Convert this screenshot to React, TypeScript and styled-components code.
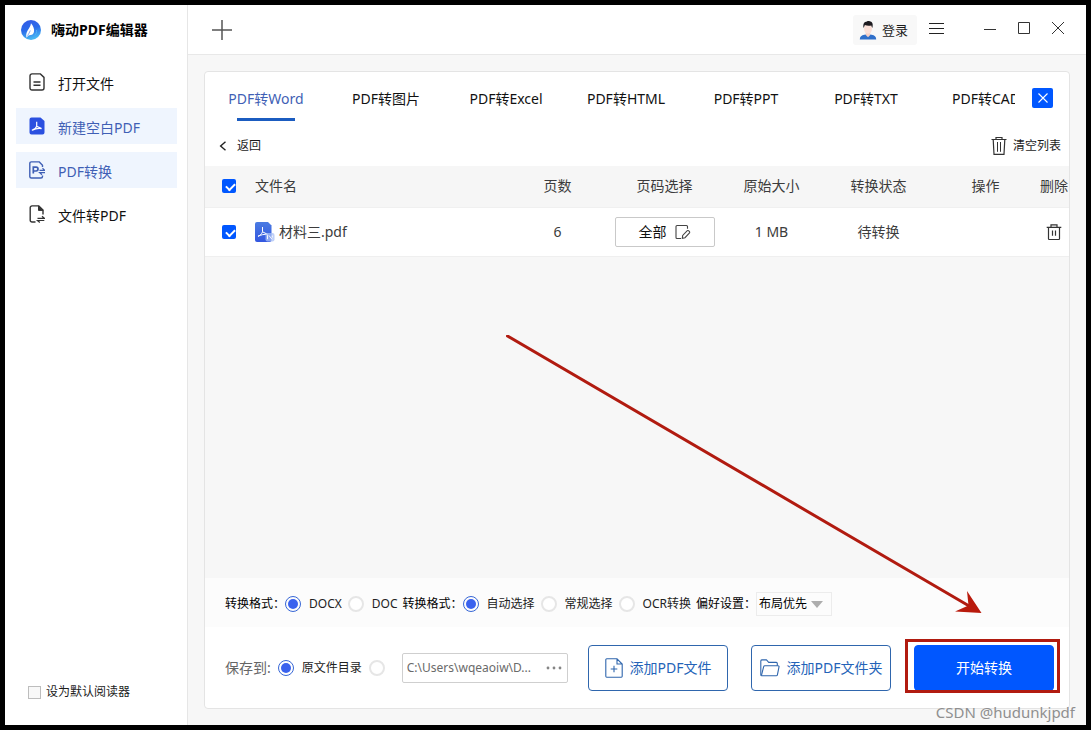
import React from 'react';
import styled, { createGlobalStyle } from 'styled-components';

const BLUE = '#0057ff';
const LINK = '#3f5fb5';

const GlobalStyle = createGlobalStyle`
  * { box-sizing: border-box; }
  body {
    margin: 0;
    background: #000;
    color: #1c1c1c;
    font-family: 'Noto Sans', 'Noto Sans CJK SC', sans-serif;
    font-size: 14px;
    line-height: 20px;
  }
  button, input, select {
    font: inherit;
    color: inherit;
    margin: 0;
  }
  button {
    padding: 0;
    border: 0;
    background: none;
    cursor: pointer;
  }
  svg { display: block; flex: none; }
`;

const Frame = styled.div`
  position: relative;
  display: flex;
  min-height: 100vh;
  border: 5px solid #000;
  background: #fff;
`;

const Sidebar = styled.aside`
  flex: 0 0 183px;
  display: flex;
  flex-direction: column;
  border-right: 1px solid #e6e6e6;
`;

const Brand = styled.div`
  display: flex;
  align-items: center;
  gap: 10px;
  height: 50px;
  padding-left: 16px;
  font-weight: 700;
  color: #000;
`;

const Menu = styled.nav`
  flex: 1;
  display: flex;
  flex-direction: column;
  gap: 8px;
  padding: 9px 10px 9px 11px;
`;

const MenuItem = styled.a<{ $active?: boolean }>`
  display: flex;
  align-items: center;
  gap: 13px;
  height: 36px;
  padding-left: 13px;
  color: ${(p) => (p.$active ? LINK : '#111')};
  background: ${(p) => (p.$active ? '#eff5fe' : 'transparent')};
  text-decoration: none;
`;

const MenuText = styled.span`
  padding-top: 3px;
`;

const DefaultReader = styled.label`
  display: flex;
  align-items: center;
  gap: 5px;
  padding: 0 0 23px 23px;
  font-size: 12px;
`;

const PlainCheckbox = styled.input`
  appearance: none;
  width: 13px;
  height: 13px;
  border: 1px solid #bdbdbd;
  background: #f8f8f8;
`;

const Main = styled.main`
  flex: 1;
  min-width: 0;
  display: flex;
  flex-direction: column;
  background: #f7f7f7;
`;

const TopBar = styled.header`
  display: flex;
  align-items: center;
  height: 50px;
  padding: 0 22px 0 24px;
  border-bottom: 1px solid #e8e8e8;
  background: #fff;
`;

const LoginButton = styled.button`
  display: flex;
  align-items: center;
  gap: 5px;
  height: 30px;
  margin: 0 12px 0 auto;
  padding: 0 9px 0 6px;
  border-radius: 3px;
  background: #f8f8f8;
  font-size: 13px;
`;

const WindowControls = styled.div`
  display: flex;
  gap: 22px;
  margin-left: 40px;
  padding-bottom: 4px;
`;

const Panel = styled.section`
  flex: 1;
  display: flex;
  flex-direction: column;
  margin: 16px;
  border: 1px solid #e4e4e4;
  border-radius: 4px;
`;

const TabRow = styled.div`
  display: flex;
  align-items: center;
  height: 52px;
  padding: 0 16px 0 1px;
  border-radius: 4px 4px 0 0;
  background: #fff;
`;

const TabList = styled.div`
  flex: 1;
  min-width: 0;
  display: flex;
  align-self: stretch;
  overflow: hidden;
`;

const Tab = styled.button<{ $active?: boolean }>`
  flex: 0 0 120px;
  display: flex;
  flex-direction: column;
  align-items: center;
  gap: 9px;
  padding-top: 17px;
  color: ${(p) => (p.$active ? LINK : '#111')};

  &::after {
    content: '';
    width: 58px;
    height: 3px;
    background: ${(p) => (p.$active ? '#1b5cc0' : 'transparent')};
  }
`;

const CloseTab = styled.button`
  display: grid;
  place-items: center;
  width: 21px;
  height: 20px;
  margin-left: 17px;
  border-radius: 2px;
  background: ${BLUE};
`;

const ToolRow = styled.div`
  display: flex;
  align-items: center;
  justify-content: space-between;
  height: 42px;
  padding: 2px 8px 0 14px;
  background: #fff;
  font-size: 12px;
`;

const ToolButton = styled.button<{ $gap: number }>`
  display: flex;
  align-items: center;
  gap: ${(p) => p.$gap}px;
`;

const FileTable = styled.table`
  width: 100%;
  table-layout: fixed;
  border-collapse: collapse;
  background: #fff;
  color: #3c3c3c;
`;

const Col = styled.col<{ $w?: number }>`
  width: ${(p) => (p.$w ? `${p.$w}px` : 'auto')};
`;

const Th = styled.th<{ $left?: boolean }>`
  height: 41px;
  padding: 0;
  background: #f6f6f6;
  border-bottom: 1px solid #f0f0f0;
  font-weight: 400;
  text-align: ${(p) => (p.$left ? 'left' : 'center')};
  white-space: nowrap;
`;

const Td = styled.td`
  height: 49px;
  padding: 0;
  border-bottom: 1px solid #efefef;
  text-align: center;
`;

const BlueCheckbox = styled.input`
  appearance: none;
  display: block;
  width: 14px;
  height: 14px;
  margin: 0 0 0 17px;
  border-radius: 2px;
  background: ${BLUE};

  &:checked::after {
    content: '';
    display: block;
    width: 7px;
    height: 4px;
    margin: 4px 0 0 4px;
    border: solid #fff;
    border-width: 0 0 2px 2px;
    transform: rotate(-45deg);
  }
`;

const FileName = styled.span`
  display: flex;
  align-items: center;
  gap: 4px;
`;

const PageSelect = styled.button`
  display: flex;
  align-items: center;
  justify-content: center;
  gap: 8px;
  width: 100px;
  height: 30px;
  margin: 0 auto;
  border: 1px solid #c9c9c9;
  border-radius: 2px;
  color: #111;
`;

const DeleteButton = styled.button`
  display: block;
  margin: 0 auto;
`;

const FormatRow = styled.div`
  display: flex;
  flex-wrap: wrap;
  align-items: center;
  gap: 5px;
  min-height: 49px;
  margin-top: auto;
  padding: 2px 20px 0;
  background: #fcfcfc;
  font-size: 12px;
`;

const Group = styled.div`
  display: flex;
  align-items: center;
  gap: 6px;
`;

const Legend = styled.span`
  margin-right: -6px;
  color: #000;
`;

const Option = styled.label`
  display: flex;
  align-items: center;
  gap: 8px;
  font-size: 12px;
  color: #222;
  white-space: nowrap;
`;

const Radio = styled.input`
  appearance: none;
  width: 16px;
  height: 16px;
  border: 2px solid #e6e6e6;
  border-radius: 50%;
  background: #fff;

  &:checked {
    padding: 2px;
    border: 1px solid #3767d6;
    background: #3a62ee content-box;
  }
`;

const SelectBox = styled.span`
  position: relative;

  svg {
    position: absolute;
    top: 9px;
    right: 9px;
    pointer-events: none;
  }
`;

const Select = styled.select`
  appearance: none;
  display: block;
  width: 76px;
  height: 24px;
  padding: 0 2px;
  border: 1px solid #ececec;
  border-radius: 0;
  background: #fcfcfc;
  color: #000;
`;

const SaveRow = styled.div`
  display: flex;
  flex-wrap: wrap;
  align-items: center;
  gap: 7px;
  min-height: 81px;
  padding: 0 15px 0 20px;
  border-radius: 0 0 4px 4px;
  background: #fff;
`;

const SaveLabel = styled.span`
  color: #666;
`;

const PathBox = styled.div`
  display: flex;
  align-items: center;
  width: 166px;
  height: 30px;
  margin-left: 10px;
  padding: 0 5px 0 4px;
  border: 1px solid #cfcfcf;
  border-radius: 2px;
`;

const PathInput = styled.input`
  flex: 1;
  min-width: 0;
  padding: 0;
  border: 0;
  outline: 0;
  background: none;
  color: #6a6a6a;
  font-size: 12px;
`;

const Actions = styled.div`
  display: flex;
  gap: 23px;
  margin-left: auto;
`;

const ActionButton = styled.button<{ $primary?: boolean }>`
  display: flex;
  align-items: center;
  justify-content: center;
  gap: 7px;
  width: 140px;
  height: 46px;
  border: 1px solid ${(p) => (p.$primary ? BLUE : '#2f66ad')};
  border-radius: 4px;
  background: ${(p) => (p.$primary ? BLUE : '#fff')};
  color: ${(p) => (p.$primary ? '#fff' : '#2463b8')};
  white-space: nowrap;
`;

const Highlighted = styled.div`
  position: relative;

  &::after {
    content: '';
    position: absolute;
    inset: -6px -6px -2px -9px;
    border: 3px solid #b11b10;
    pointer-events: none;
  }
`;

const Arrow = styled.svg`
  position: absolute;
  right: 100px;
  bottom: 105px;
  pointer-events: none;
`;

const Watermark = styled.span`
  position: absolute;
  right: 11px;
  bottom: 3px;
  color: #8f8f8f;
  font-size: 15px;
`;

const Logo = () => (
  <svg width="20" height="20" viewBox="0 0 20 20">
    <defs>
      <linearGradient id="logo" x1="0" y1="0" x2="0.3" y2="1">
        <stop offset="0" stopColor="#3558e6" />
        <stop offset="0.55" stopColor="#2a6cea" />
        <stop offset="1" stopColor="#45b4f2" />
      </linearGradient>
    </defs>
    <circle cx="10" cy="10" r="10" fill="url(#logo)" />
    <path d="M10 3.200C12.200 6 13.600 8.600 13 11.800c-.5 2.300-1.900 3.300-3.400 3.200-1.700.1-3.300 1.300-3.900 2.800-1-2.300-.4-4.900.8-7.100C7.900 8.100 9.600 6.500 10 3.200Z" fill="#fff" />
    <path d="M9.300 10.500c-.5 2-1.600 3-2.800 5.200" stroke="#3b74ea" strokeWidth=".6" fill="none" />
    <path d="M13.600 15.300c1.600-1.300 2.400-3.200 1.900-5.300" stroke="#55b8f5" strokeWidth=".8" fill="none" />
  </svg>
);

const OpenIcon = () => (
  <svg width="16" height="18" viewBox="0 0 16 18" fill="none" stroke="#333" strokeWidth="1.4">
    <path d="M3 .9h8.400L15 4.400V15a2 2 0 0 1-2 2H3a2 2 0 0 1-2-2V2.900a2 2 0 0 1 2-2Z" />
    <path d="M4.500 9h7M4.500 12.200h7" />
  </svg>
);

const BlankIcon = () => (
  <svg width="16" height="18" viewBox="0 0 16 18">
    <path d="M2.500.5h9L15.500 4v11.500a2 2 0 0 1-2 2h-11a2 2 0 0 1-2-2v-13a2 2 0 0 1 2-2Z" fill="#2b50e0" />
    <path d="M7.700 4.800v4.400l4.900 2.400M7.700 9.200c-.6 1.800-2.200 3.200-4.400 3.900 2.600-1.300 5.800-2 9.300-1.500" fill="none" stroke="#fff" strokeWidth="1.200" strokeLinejoin="round" />
  </svg>
);

const ConvertIcon = () => (
  <svg width="16" height="18" viewBox="0 0 16 18" fill="none" stroke={LINK} strokeWidth="1.400">
    <path d="M13.500 6V4.200L10.300.9H2.300A1.500 1.500 0 0 0 .8 2.400v13.200A1.500 1.500 0 0 0 2.300 17h9.700a1.500 1.500 0 0 0 1.500-1.500v-1" />
    <path d="M4.300 12.500V6.200h2.800a1.900 1.900 0 0 1 0 3.800H4.300" strokeWidth="1.700" />
    <path d="M10.500 9.300h5.300L13.500 7.300M16 11.700h-5.300l2.300 2" strokeWidth="1.200" />
  </svg>
);

const ToPdfIcon = () => (
  <svg width="16" height="18" viewBox="0 0 16 18" fill="none" stroke="#333" strokeWidth="1.400">
    <path d="M6.500 17H3a1.800 1.800 0 0 1-1.800-1.800V2.700A1.800 1.800 0 0 1 3 .9h6.800L14 5v4.500" />
    <path d="M9.500.9 14 5.400H9.500Z" fill="#333" strokeWidth="1" />
    <path d="M8.500 13.300h6.800L13 11.300M15.300 15.500H8.500l2.300 2" strokeWidth="1.200" />
  </svg>
);

const Avatar = () => (
  <svg width="18" height="20" viewBox="0 0 18 20">
    <path d="M.8 19.500c0-3 1.700-4.100 4.500-4.700L9 14.300l3.700.5c2.800.6 4.500 1.700 4.500 4.700Z" fill="#2f6fca" />
    <path d="M6.800 12.500h4.400V15L9 17.200 6.800 15Z" fill="#f6cfc4" />
    <ellipse cx="9" cy="8.700" rx="4" ry="5.100" fill="#fbe0d8" />
    <path d="M4.600 8C3.700 3.900 5.200 1.600 8 1.400c1-.8 5.800-.2 5.700 3.300 0 1.200-.1 2.300-.4 3.300-.6-.8-.7-1.800-1-2.600-2 .6-4.600.4-6.400-.3-.5.900-.8 1.900-1.300 2.900Z" fill="#1d1b20" />
  </svg>
);

const BackIcon = () => (
  <svg width="8" height="10" viewBox="0 0 8 10" fill="none" stroke="#222" strokeWidth="1.400">
    <path d="M6.500.7 1.600 5l4.900 4.300" />
  </svg>
);

const ClearIcon = () => (
  <svg width="16" height="20" viewBox="0 0 16 20" fill="none" stroke="#333" strokeWidth="1.200">
    <path d="M.5 3.500h15M5 3.500V1.500h6v2M2.200 3.500 3 18.400h10l.8-14.900" />
    <path d="M6.500 6v9.800M9.500 6v9.800" strokeWidth="1" />
  </svg>
);

const TrashIcon = () => (
  <svg width="16" height="18" viewBox="0 0 16 18" fill="none" stroke="#333" strokeWidth="1.200">
    <path d="M.7 4.400h14.600M5 4.400V1.900h6v2.500M2.500 4.400v11.400q0 .7.700.7h9.600q.7 0 .7-.7V4.400M6.500 7.500v5.200M9.500 7.500v5.200" />
  </svg>
);

const PdfFileIcon = () => (
  <svg width="20" height="20" viewBox="0 0 20 20">
    <defs>
      <linearGradient id="pdf" x1="0" y1="0" x2="0" y2="1">
        <stop offset="0" stopColor="#4a7be2" />
        <stop offset="1" stopColor="#3357e0" />
      </linearGradient>
    </defs>
    <path d="M2 0h11l3.500 3.500V18a2 2 0 0 1-2 2H2a2 2 0 0 1-2-2V2a2 2 0 0 1 2-2Z" fill="url(#pdf)" />
    <path d="M7.500 5v4.800l5.200 2.600M7.500 9.800c-.6 2-2.200 3.600-4.500 4.500 2.800-1.400 6.100-2.300 9.700-1.900" fill="none" stroke="#fff" strokeWidth="1" strokeLinejoin="round" />
    <rect x="10.500" y="11" width="9" height="8.500" rx="2" fill="#a9c0f5" opacity=".75" />
    <path d="M12.500 13.200v4M14 13.500l3 3.800M17.300 13.500v2" stroke="#fff" strokeWidth=".9" />
  </svg>
);

const EditIcon = () => (
  <svg width="16" height="16" viewBox="0 0 16 16" fill="none" stroke="#444" strokeWidth="1.100">
    <path d="M12.500 4.800V2.500a1 1 0 0 0-1-1H2a1 1 0 0 0-1 1v11a1 1 0 0 0 1 1h4" />
    <path d="m7.300 14.300.4-2.900 4.600-4.700q.6-.5 1.200 0l1 1q.5.600 0 1.200L10 13.700Z" />
  </svg>
);

const AddFileIcon = () => (
  <svg width="18" height="20" viewBox="0 0 18 20" fill="none" stroke="#2f66ad" strokeWidth="1.100">
    <path d="M12 .8H1.700a.9.900 0 0 0-.9.900v16.600q0 .9.900.9h14.600q.9 0 .9-.9V6ZM12 .8V6h5.200M9 7.700v6.600M5.700 11h6.600" />
  </svg>
);

const FolderIcon = () => (
  <svg width="20" height="18" viewBox="0 0 20 18" fill="none" stroke="#2f66ad" strokeWidth="1.100" strokeLinejoin="round">
    <path d="M1.800 16.800Q.8 16.800.8 15.800V1.900q0-1 1-1h4.700l2.200 2.500h7.600q1 0 1 1v2.400" />
    <path d="M1.400 16.600 3.600 7.800q.3-1 1.200-1h13.300q1.100 0 .9 1l-1.600 8q-.2 1-1.200 1H1.800" />
  </svg>
);

const menu = [
  { label: '打开文件', icon: <OpenIcon /> },
  { label: '新建空白PDF', icon: <BlankIcon />, active: true },
  { label: 'PDF转换', icon: <ConvertIcon />, active: true },
  { label: '文件转PDF', icon: <ToPdfIcon /> },
];

const tabs = ['PDF转Word', 'PDF转图片', 'PDF转Excel', 'PDF转HTML', 'PDF转PPT', 'PDF转TXT', 'PDF转CAD'];

function RadioOption({ name, label, checked }: { name: string; label: string; checked?: boolean }) {
  return (
    <Option>
      <Radio type="radio" name={name} defaultChecked={checked} />
      {label}
    </Option>
  );
}

export default function App() {
  return (
    <>
      <GlobalStyle />
      <Frame>
        <Sidebar>
          <Brand>
            <Logo />
            嗨动PDF编辑器
          </Brand>
          <Menu>
            {menu.map((m) => (
              <MenuItem key={m.label} href="#" $active={m.active}>
                {m.icon}
                <MenuText>{m.label}</MenuText>
              </MenuItem>
            ))}
          </Menu>
          <DefaultReader>
            <PlainCheckbox type="checkbox" />
            设为默认阅读器
          </DefaultReader>
        </Sidebar>

        <Main>
          <TopBar>
            <button aria-label="新建">
              <svg width="20" height="20" viewBox="0 0 20 20" stroke="#555" strokeWidth="1.500">
                <path d="M10 0v20M0 10h20" />
              </svg>
            </button>
            <LoginButton>
              <Avatar />
              登录
            </LoginButton>
            <button aria-label="菜单">
              <svg width="15" height="16" viewBox="0 0 15 16" stroke="#222" strokeWidth="1">
                <path d="M0 1.500h15M0 6.500h15M0 11.500h15" />
              </svg>
            </button>
            <WindowControls>
              <button aria-label="最小化">
                <svg width="12" height="12" viewBox="0 0 12 12" stroke="#333">
                  <path d="M0 7.500h12" />
                </svg>
              </button>
              <button aria-label="最大化">
                <svg width="12" height="12" viewBox="0 0 12 12" stroke="#333" fill="none">
                  <path d="M.5.5h11v11H.5Z" />
                </svg>
              </button>
              <button aria-label="关闭">
                <svg width="12" height="12" viewBox="0 0 12 12" stroke="#333">
                  <path d="m0 0 12 12M12 0 0 12" />
                </svg>
              </button>
            </WindowControls>
          </TopBar>

          <Panel>
            <TabRow>
              <TabList role="tablist">
                {tabs.map((t, i) => (
                  <Tab key={t} role="tab" aria-selected={i === 0} $active={i === 0}>
                    {t}
                  </Tab>
                ))}
              </TabList>
              <CloseTab aria-label="关闭转换">
                <svg width="10" height="10" viewBox="0 0 10 10" stroke="#fff" strokeWidth="1.100">
                  <path d="m.5.5 9 9M9.500.5l-9 9" />
                </svg>
              </CloseTab>
            </TabRow>

            <ToolRow>
              <ToolButton $gap={10}>
                <BackIcon />
                返回
              </ToolButton>
              <ToolButton $gap={6}>
                <ClearIcon />
                清空列表
              </ToolButton>
            </ToolRow>

            <FileTable>
              <colgroup>
                <Col $w={50} />
                <Col />
                <Col $w={107} />
                <Col $w={107} />
                <Col $w={107} />
                <Col $w={107} />
                <Col $w={107} />
                <Col $w={30} />
              </colgroup>
              <thead>
                <tr>
                  <Th>
                    <BlueCheckbox type="checkbox" defaultChecked aria-label="全选" />
                  </Th>
                  <Th $left>文件名</Th>
                  <Th>页数</Th>
                  <Th>页码选择</Th>
                  <Th>原始大小</Th>
                  <Th>转换状态</Th>
                  <Th>操作</Th>
                  <Th>删除</Th>
                </tr>
              </thead>
              <tbody>
                <tr>
                  <Td>
                    <BlueCheckbox type="checkbox" defaultChecked aria-label="选择 材料三.pdf" />
                  </Td>
                  <Td>
                    <FileName>
                      <PdfFileIcon />
                      材料三.pdf
                    </FileName>
                  </Td>
                  <Td>6</Td>
                  <Td>
                    <PageSelect>
                      全部
                      <EditIcon />
                    </PageSelect>
                  </Td>
                  <Td>1 MB</Td>
                  <Td>待转换</Td>
                  <Td />
                  <Td>
                    <DeleteButton aria-label="删除文件">
                      <TrashIcon />
                    </DeleteButton>
                  </Td>
                </tr>
              </tbody>
            </FileTable>

            <FormatRow>
              <Group role="radiogroup" aria-label="文档格式">
                <Legend>转换格式：</Legend>
                <RadioOption name="format" label="DOCX" checked />
                <RadioOption name="format" label="DOC" />
              </Group>
              <Group role="radiogroup" aria-label="转换方式">
                <Legend>转换格式：</Legend>
                <RadioOption name="mode" label="自动选择" checked />
                <RadioOption name="mode" label="常规选择" />
                <RadioOption name="mode" label="OCR转换" />
              </Group>
              <Group>
                <Legend as="label" htmlFor="preference">偏好设置：</Legend>
                <SelectBox>
                  <Select id="preference">
                    <option>布局优先</option>
                  </Select>
                  <svg width="12" height="7" viewBox="0 0 12 7" fill="#adadad">
                    <path d="M0 0h12L6 7Z" />
                  </svg>
                </SelectBox>
              </Group>
            </FormatRow>

            <SaveRow>
              <SaveLabel>保存到:</SaveLabel>
              <RadioOption name="target" label="原文件目录" checked />
              <Radio type="radio" name="target" aria-label="自定义目录" />
              <PathBox>
                <PathInput aria-label="保存路径" readOnly value="C:\Users\wqeaoiw\D..." />
                <button aria-label="浏览">
                  <svg width="16" height="4" viewBox="0 0 16 4" fill="#858585">
                    <circle cx="2" cy="2" r="1.400" />
                    <circle cx="8" cy="2" r="1.400" />
                    <circle cx="14" cy="2" r="1.400" />
                  </svg>
                </button>
              </PathBox>
              <Actions>
                <ActionButton>
                  <AddFileIcon />
                  添加PDF文件
                </ActionButton>
                <ActionButton>
                  <FolderIcon />
                  添加PDF文件夹
                </ActionButton>
                <Highlighted>
                  <ActionButton $primary>开始转换</ActionButton>
                </Highlighted>
              </Actions>
            </SaveRow>
          </Panel>
        </Main>

        <Arrow width="480" height="285" viewBox="0 0 480 285">
          <path d="M1.500 1 464 271.500" stroke="#b11b10" strokeWidth="3" strokeLinecap="round" />
          <path d="m475.500 278-26.500-1.500 13.500-6-1.500-14.500Z" fill="#b91a0c" />
        </Arrow>
        <Watermark>CSDN @hudunkjpdf</Watermark>
      </Frame>
    </>
  );
}
